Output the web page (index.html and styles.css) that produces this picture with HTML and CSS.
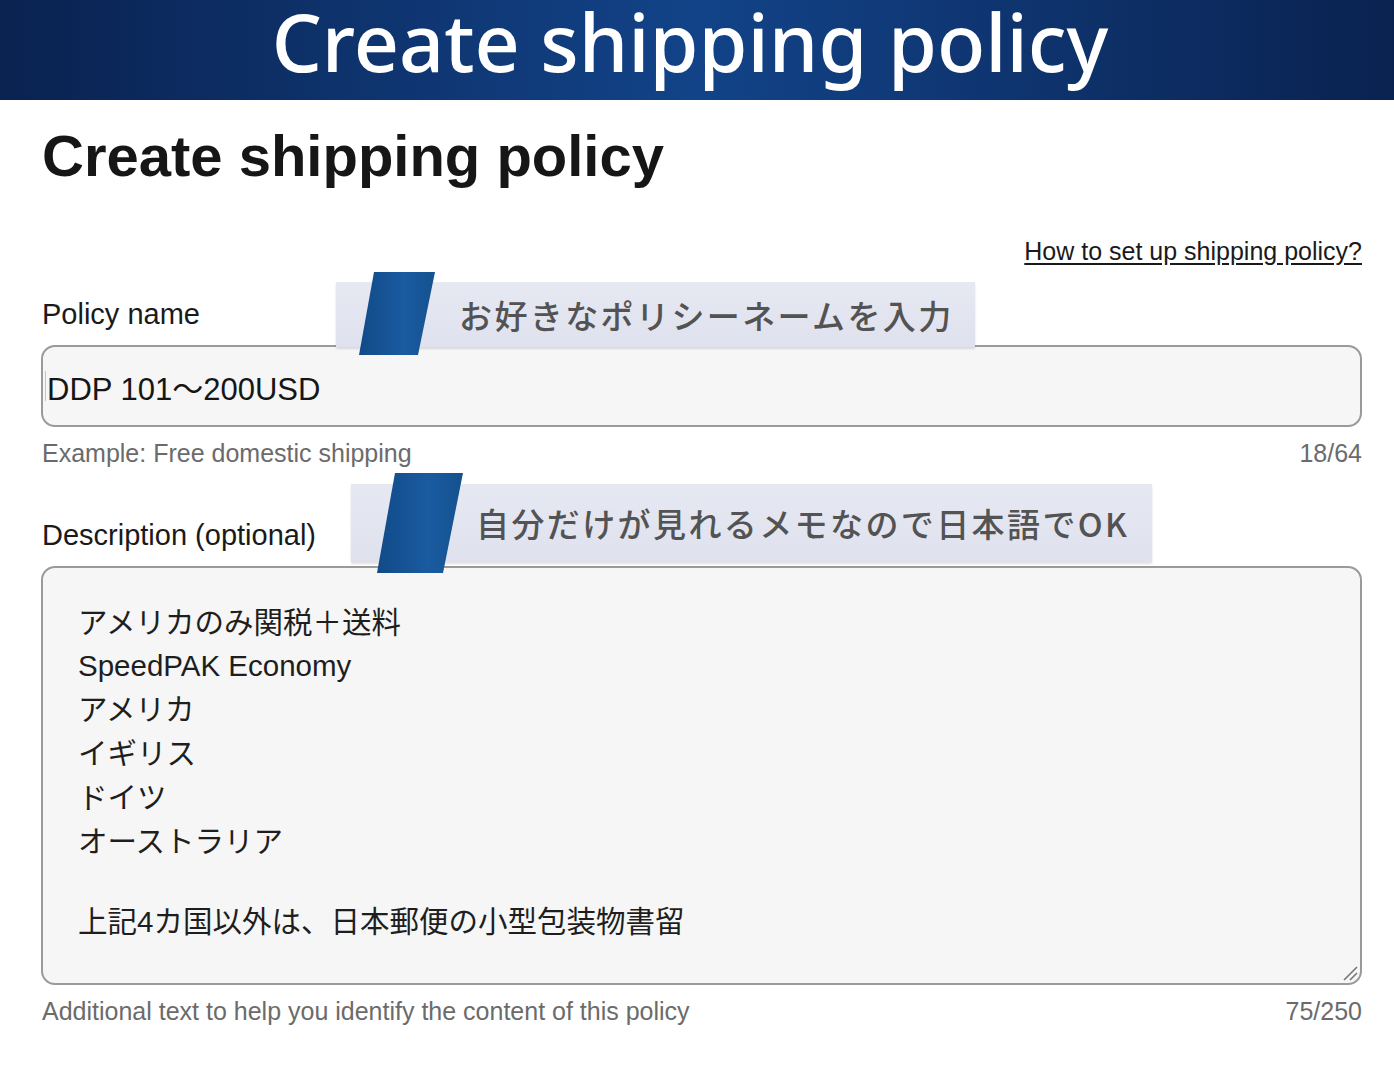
FILE: index.html
```html
<!DOCTYPE html>
<html lang="ja">
<head>
<meta charset="utf-8">
<title>Create shipping policy</title>
<link rel="stylesheet" href="styles.css">
</head>
<body>
<header class="banner">
  <div class="banner-title">Create shipping policy</div>
</header>
<main class="main">
  <h1 class="page-title">Create shipping policy</h1>
  <div class="link-row"><a class="help-link" href="#">How to set up shipping policy?</a></div>

  <div class="field-label">Policy name</div>
  <div class="input-box"><span class="caret"></span>DDP 101〜200USD</div>
  <div class="helper-row"><span>Example: Free domestic shipping</span><span>18/64</span></div>

  <div class="field-label label-desc">Description (optional)</div>
  <div class="textarea-box">
    <div class="line first">アメリカのみ関税＋送料</div>
    <div class="line">SpeedPAK Economy</div>
    <div class="line">アメリカ</div>
    <div class="line">イギリス</div>
    <div class="line">ドイツ</div>
    <div class="line">オーストラリア</div>
    <div class="blank"></div>
    <div class="line">上記4カ国以外は、日本郵便の小型包装物書留</div>
    <svg class="resize" width="16" height="16" viewBox="0 0 16 16"><path d="M2 15 L15 2 M8 15 L15 8" stroke="#777" stroke-width="1.6" fill="none"/></svg>
  </div>
  <div class="helper-row"><span>Additional text to help you identify the content of this policy</span><span>75/250</span></div>

  <div class="callout callout-1"><span>お好きなポリシーネームを入力</span></div>
  <div class="ribbon ribbon-1"></div>
  <div class="callout callout-2"><span>自分だけが見れるメモなので日本語でOK</span></div>
  <div class="ribbon ribbon-2"></div>
</main>
</body>
</html>
```

FILE: styles.css
```css
* { box-sizing: border-box; }
html, body { margin: 0; padding: 0; background: #fff; }
body { font-family: "Liberation Sans", Arial, "Noto Sans CJK JP", sans-serif; color: #1a1a1a; }

.banner {
  height: 100px;
  background: linear-gradient(90deg, #0a2250 0%, #124388 50%, #0a2250 100%);
  display: flex;
  justify-content: center;
  align-items: flex-start;
}
.banner-title {
  font-family: "Noto Sans", "Open Sans", sans-serif;
  font-weight: 500;
  font-size: 79px;
  line-height: 84px;
  height: 100px;
  padding-bottom: 16px;
  color: #fff;
  margin-right: 14px;
  white-space: nowrap;
}

.main {
  position: relative;
  padding: 23px 32px 40px 41px;
}
.page-title {
  margin: 0 0 0 1px;
  font-size: 58px;
  line-height: 66px;
  font-weight: 700;
  color: #161616;
}
.link-row {
  margin-top: 47px;
  display: flex;
  justify-content: flex-end;
  font-size: 25px;
  line-height: 30px;
}
.help-link { color: #1a1a1a; text-decoration: underline; text-underline-offset: 3px; }

.field-label {
  margin-top: 31px;
  font-size: 29px;
  line-height: 34px;
  color: #1a1a1a;
  margin-left: 1px;
}
.label-desc { margin-top: 50px; }

.input-box {
  margin-top: 14px;
  height: 82px;
  border: 2px solid #9a9a9a;
  border-radius: 14px;
  background: #f6f6f6;
  display: flex;
  align-items: center;
  padding-left: 2px;
  font-size: 31px;
  color: #161616;
}
.caret { width: 1px; height: 30px; background: #c4c4c4; margin-right: 1px; }

.helper-row {
  margin-top: 11px;
  display: flex;
  justify-content: space-between;
  font-size: 25px;
  line-height: 30px;
  color: #6b6b6b;
  padding-left: 1px;
}

.textarea-box {
  position: relative;
  margin-top: 14px;
  height: 419px;
  border: 2px solid #9a9a9a;
  border-radius: 14px;
  background: #f6f6f6;
  padding: 34px 35px;
  font-size: 29.5px;
  color: #1e1e1e;
}
.line { line-height: 44px; height: 44px; white-space: nowrap; }
.line.first { height: 42px; line-height: 42px; }
.blank { height: 36px; }
.resize { position: absolute; right: 2px; bottom: 2px; }

.callout {
  position: absolute;
  background: linear-gradient(180deg, #e6e8f2, #dfe2ee);
  box-shadow: 0 2px 2px rgba(0,0,0,0.12);
  display: flex;
  align-items: center;
  font-family: "Noto Sans CJK JP", sans-serif;
  font-weight: 500;
  font-size: 33px;
  letter-spacing: 2.4px;
  color: #535353;
}
.callout-1 { left: 336px; top: 182px; width: 639px; height: 65px; padding-left: 123px; }
.callout-2 { left: 351px; top: 384px; width: 801px; height: 78px; padding-left: 125px; }

.ribbon {
  position: absolute;
  background: linear-gradient(90deg, #114a88, #1a5ba0 60%, #14518f);
  filter: drop-shadow(-2px 2px 2px rgba(0,0,0,0.25));
}
.ribbon-1 {
  left: 359px; top: 172px; width: 76px; height: 83px;
  clip-path: polygon(15px 0, 76px 0, 59px 83px, 0 83px);
}
.ribbon-2 {
  left: 377px; top: 373px; width: 86px; height: 100px;
  clip-path: polygon(18px 0, 86px 0, 66px 100px, 0 100px);
}
```
